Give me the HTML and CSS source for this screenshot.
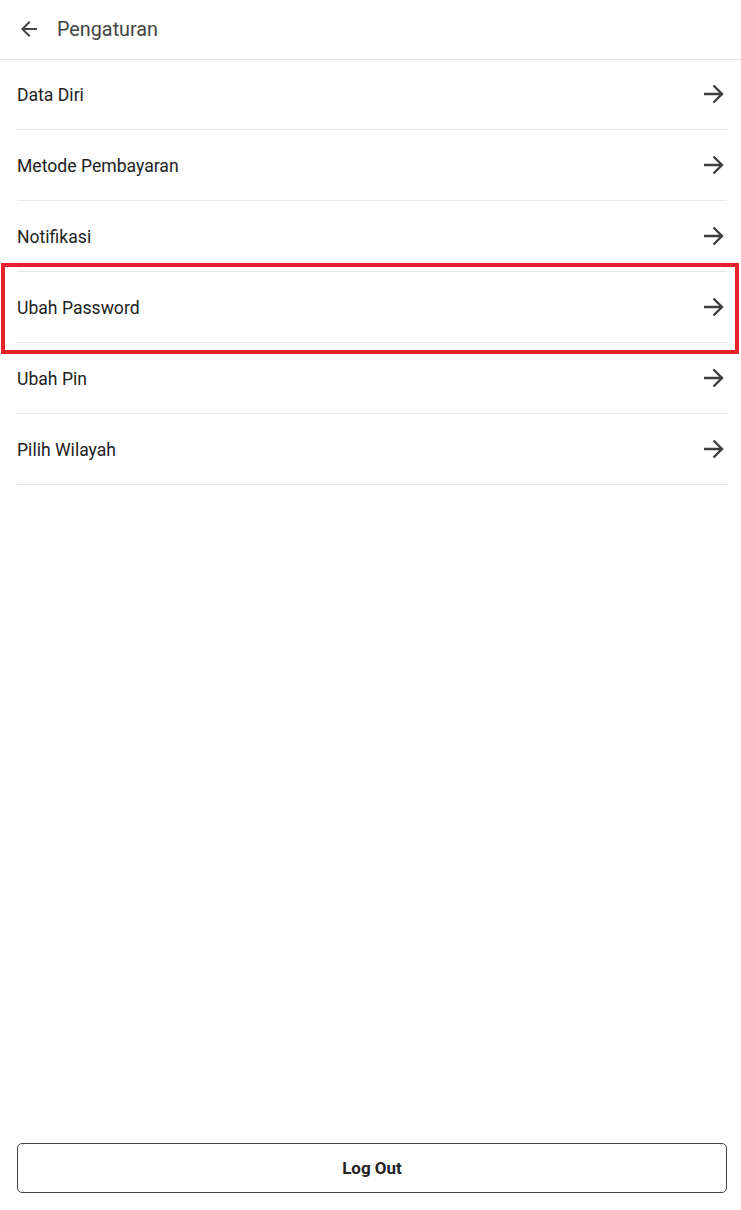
FILE: index.html
```html
<!DOCTYPE html>
<html lang="id">
<head>
<meta charset="utf-8">
<title>Pengaturan</title>
<link rel="stylesheet" href="styles.css">
</head>
<body>
<div class="page">
  <header class="topbar">
    <button class="back" aria-label="Kembali">
      <svg width="24" height="24" viewBox="0 0 24 24"><path d="M20 11H7.83l5.59-5.59L12 4l-8 8 8 8 1.41-1.41L7.83 13H20v-2z" fill="#444"/></svg>
    </button>
    <h1 class="title">Pengaturan</h1>
  </header>
  <ul class="menu">
    <li class="item"><span>Data Diri</span><svg class="arrow" viewBox="0 0 24 24"><path d="M3 12h18M12.5 3.5 21 12l-8.5 8.5"/></svg></li>
    <li class="item"><span>Metode Pembayaran</span><svg class="arrow" viewBox="0 0 24 24"><path d="M3 12h18M12.5 3.5 21 12l-8.5 8.5"/></svg></li>
    <li class="item"><span>Notifikasi</span><svg class="arrow" viewBox="0 0 24 24"><path d="M3 12h18M12.5 3.5 21 12l-8.5 8.5"/></svg></li>
    <li class="item highlighted"><span>Ubah Password</span><svg class="arrow" viewBox="0 0 24 24"><path d="M3 12h18M12.5 3.5 21 12l-8.5 8.5"/></svg><div class="mark"></div></li>
    <li class="item"><span>Ubah Pin</span><svg class="arrow" viewBox="0 0 24 24"><path d="M3 12h18M12.5 3.5 21 12l-8.5 8.5"/></svg></li>
    <li class="item"><span>Pilih Wilayah</span><svg class="arrow" viewBox="0 0 24 24"><path d="M3 12h18M12.5 3.5 21 12l-8.5 8.5"/></svg></li>
  </ul>
  <div class="footer">
    <button class="logout">Log Out</button>
  </div>
</div>
</body>
</html>
```
FILE: styles.css
```css
* { box-sizing: border-box; }
html, body { margin: 0; padding: 0; background: #fff; }
body { font-family: Roboto, "Noto Sans", Arial, sans-serif; color: #222; }
.page { min-height: 100vh; display: flex; flex-direction: column; }
.topbar {
  height: 60px;
  display: flex;
  align-items: center;
  padding: 0 0 0 17px;
  border-bottom: 1px solid #e4e4e4;
}
.back {
  width: 24px; height: 24px; padding: 0; border: 0; background: none;
  display: flex; align-items: center; justify-content: center; margin-top: -1px;
}
.title {
  margin: -1px 0 0 16px;
  font-size: 19.8px;
  font-weight: 400;
  color: #444;
}
.menu { list-style: none; margin: -1px 0 0; padding: 0 14px 0 17px; flex: 1; }
.item {
  position: relative;
  height: 71px;
  display: flex;
  align-items: center;
  justify-content: space-between;
  border-bottom: 1px solid #e6e6e6;
  font-size: 17.6px;
  color: #222;
}
.item span { margin-top: 1px; }
.arrow {
  width: 24px; height: 24px;
  margin-right: 2px;
  fill: none; stroke: #3e3e3e; stroke-width: 2.4;
  stroke-linecap: butt;
}
.mark {
  position: absolute;
  left: -16px; right: -12px; top: -9px; bottom: -12px;
  border: 4.5px solid #e5222a;
  pointer-events: none;
}
.footer { padding: 0 14px 17px 17px; }
.logout {
  width: 100%;
  height: 50px;
  background: #fff;
  border: 1px solid #444;
  border-radius: 5px;
  font-family: Roboto, "Noto Sans", Arial, sans-serif;
  font-size: 17px;
  font-weight: 700;
  color: #222;
}
```
